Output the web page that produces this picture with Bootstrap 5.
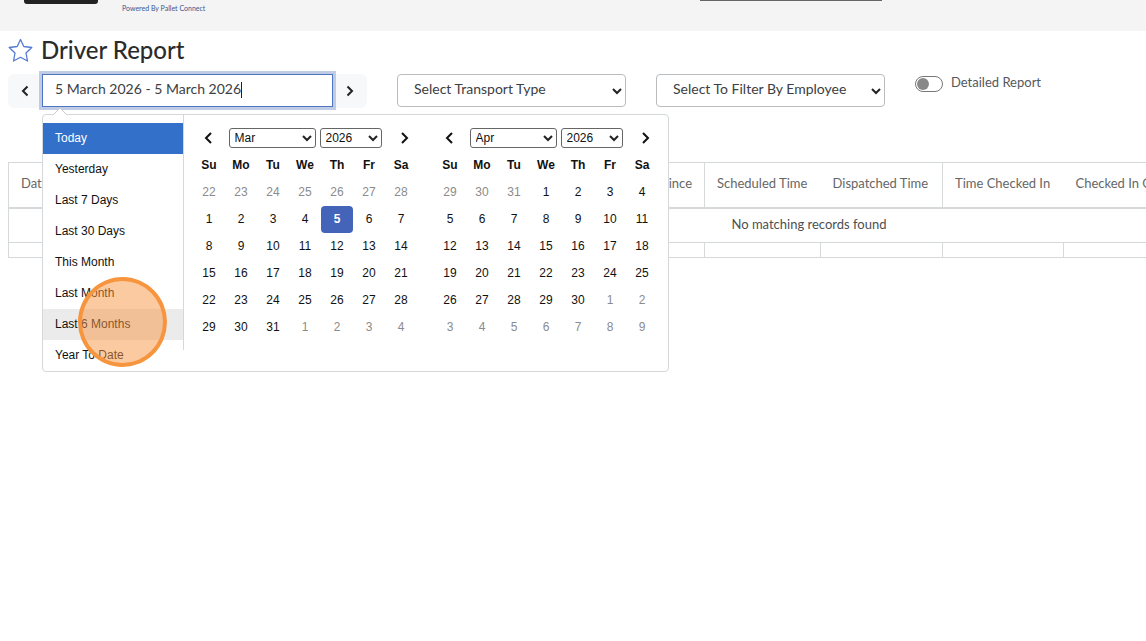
<!DOCTYPE html>
<html lang="en">
<head>
<meta charset="utf-8">
<meta name="viewport" content="width=device-width, initial-scale=1">
<title>Driver Report</title>
<link href="https://cdn.jsdelivr.net/npm/bootstrap@5.3.0/dist/css/bootstrap.min.css" rel="stylesheet">
<style>
body { font-family: Lato, sans-serif; font-size: 13px; line-height: 20px; color: #55585a; min-height: 100vh; }
.site-bar { background: #f4f4f4; height: 31px; padding-left: 24px; overflow: hidden; }
.logo-block { width: 74px; height: 4px; background: #222; border-radius: 0 0 3px 3px; }
.powered { font-size: 7px; line-height: 16px; color: #40578f; text-decoration: none; margin-left: 24px; }
.search-edge { width: 182px; height: 1px; background: #666; margin-left: 495px; }
.title-row { height: 35px; padding: 3px 8px 0; }
.page-title { font-size: 24px; line-height: 32px; color: #2b2b2b; }
.filters { padding: 4px 8px 54px; gap: 30px; }
.range-group { width: 359px; }
.step-btn { background: #f7f8fa; border: 0; width: 34px; height: 34px; padding-bottom: 4px; }
.range-input { width: 291px; height: 33px; flex: none; border: 1px solid #4f74c0; border-radius: 0; padding: 0 12px 4px; font-size: 14px; color: #3c4043; caret-color: transparent; outline: 0; box-shadow: 0 0 0 3px #c0cce6; }
.text-caret { left: 235px; top: 8px; width: 1px; height: 16px; background: #222; }
.filter-select { width: 229px; height: 33px; padding: 0 16px 3px; border: 1px solid #b9bcbf; border-radius: 4px; font-size: 14px; line-height: 20px; color: #3c4043; background-color: #fff; }
.filter-select, .cal-select { appearance: none; background-repeat: no-repeat; background-image: url("data:image/svg+xml,%3Csvg xmlns='http://www.w3.org/2000/svg' width='10' height='8'%3E%3Cpath d='M1 2l4 4 4-4' fill='none' stroke='%23222' stroke-width='2'/%3E%3C/svg%3E"); }
.filter-select { background-position: right 3px center; }
.detail-switch { padding-top: 2px; }
.toggle-box.form-check-input { width: 28px; height: 16px; margin: 4px 0 0; float: none; border-color: #777; background-image: url("data:image/svg+xml,%3Csvg xmlns='http://www.w3.org/2000/svg' viewBox='-4 -4 8 8'%3E%3Ccircle r='3.4' fill='%23888'/%3E%3C/svg%3E"); }
.report-wrap { margin-left: 8px; overflow: hidden; }
.report-table { width: 1602px; table-layout: fixed; color: #666; border-collapse: collapse; }
.report-table th, .report-table td { border: 1px solid #d5d9d9; }
.report-table th { height: 45px; padding: 0 0 3px 12px; font-weight: 400; border-bottom-width: 2px; white-space: nowrap; }
.report-table th.last-visible { padding-right: 12px; text-align: right; }
.report-table th.open-edge { border-right: 0; }
.report-table th.open-edge + th { border-left: 0; }
.report-table td { height: 35px; text-align: center; color: #4c4f51; padding: 0 0 3px; }
.report-table tfoot td { height: 15px; padding: 0; }
.picker { top: 40px; left: 34px; width: 627px; height: 258px; z-index: 5; background: #fff; border: 1px solid #d5d8da; border-radius: 4px; font: 12px/18px "Liberation Sans", Arial, sans-serif; color: #111; }
.picker-tip { top: -7px; left: 10px; width: 14px; height: 7px; }
.ranges { width: 141px; height: 235px; border-right: 1px solid #d5d8da; padding-top: 8px; flex: none; }
.ranges button { display: block; width: 100%; height: 31px; border: 0; background: none; padding: 0 12px 2px; text-align: left; color: #111; }
.ranges button.chosen { background: #3370ca; color: #fff; }
.ranges button.hovered { background: #ebebeb; }
.calendars { padding-left: 9px; gap: 17px; }
.cal { width: 224px; table-layout: fixed; margin-top: 10px; text-align: center; }
.cal th, .cal td { height: 27px; padding: 0 0 1px; }
.cal th { font-weight: 700; }
.cal td.off { color: #8b8b8b; }
.cal td.active { background: #4364b8; color: #fff; border-radius: 4px; font-weight: 700; }
.cal button { border: 0; background: none; padding: 0 2px 2px 0; width: 30px; height: 24px; }
.cal button.next { padding: 0 0 2px 6px; }
.cal-select { height: 20px; border: 1px solid #666; border-radius: 3px; padding: 0 5px; font-size: 12px; line-height: 18px; font-weight: 400; background-color: #fff; background-position: right 3px center; color: #111; }
.month { width: 87px; } .year { width: 62px; }
.click-mark { top: 162px; left: 35px; width: 89px; height: 90px; border: 4px solid #f7953e; border-radius: 50%; background: rgba(249,149,66,.5); pointer-events: none; }
</style>
</head>
<body>
<header class="site-bar d-flex align-items-start">
  <div class="logo-block"></div>
  <a href="#" class="powered">Powered By Pallet Connect</a>
  <div class="search-edge"></div>
</header>
<main>
  <div class="title-row d-flex align-items-center gap-2">
    <svg width="25" height="26" viewBox="0 0 25 26" fill="none" stroke="#557bd0" stroke-width="1.3" stroke-linejoin="round"><path d="M12.5 2.5L15.8 9.5 23.8 10.5 18 16 19.5 24 12.5 20.3 5.5 24 7 16 1.2 10.5 9.2 9.5Z"/></svg>
    <h1 class="page-title m-0">Driver Report</h1>
  </div>
  <div class="filters d-flex align-items-start">
    <div class="range-group d-flex position-relative mt-1">
      <button class="step-btn rounded-start" aria-label="Previous period"><svg width="8" height="12" viewBox="0 0 8 12" fill="none" stroke="#222" stroke-width="2"><path d="M6.5 1.5L2 6l4.5 4.5"/></svg></button>
      <div class="position-relative">
        <input class="range-input" type="text" aria-label="Date range" value="5 March 2026 - 5 March 2026" autofocus>
        <span class="text-caret position-absolute ms-n1"></span>
      </div>
      <button class="step-btn rounded-end" aria-label="Next period"><svg width="8" height="12" viewBox="0 0 8 12" fill="none" stroke="#222" stroke-width="2"><path d="M1.5 1.5L6 6l-4.5 4.5"/></svg></button>
      <div class="picker position-absolute d-flex align-items-start">
        <svg class="picker-tip position-absolute" viewBox="0 0 14 7"><path d="M0 7L7 0l7 7" fill="#fff" stroke="#ccc"/></svg>
        <div class="ranges">
          <button class="chosen">Today</button>
          <button>Yesterday</button>
          <button>Last 7 Days</button>
          <button>Last 30 Days</button>
          <button>This Month</button>
          <button>Last Month</button>
          <button class="hovered">Last 6 Months</button>
          <button>Year To Date</button>
        </div>
        <div class="d-flex align-items-start calendars"></div>
        <div class="click-mark position-absolute"></div>
      </div>
    </div>
    <select class="filter-select mt-1" aria-label="Transport type"><option>Select Transport Type</option></select>
    <select class="filter-select mt-1" aria-label="Employee"><option>Select To Filter By Employee</option></select>
    <div class="form-switch d-flex gap-2 ps-0 detail-switch">
      <input class="form-check-input toggle-box" type="checkbox" role="switch" id="detailed">
      <label for="detailed">Detailed Report</label>
    </div>
  </div>
  <div class="report-wrap">
    <table class="report-table">
      <colgroup><col width="116"><col width="116"><col width="116"><col width="116"><col width="116"><col width="116"><col width="116"><col width="122"><col width="121"><col width="140"><col></colgroup>
      <thead><tr><th>Date</th><th></th><th></th><th></th><th></th><th class="last-visible">Province</th><th class="open-edge">Scheduled Time</th><th>Dispatched Time</th><th class="open-edge">Time Checked In</th><th>Checked In On</th><th></th></tr></thead>
      <tbody><tr><td colspan="11">No matching records found</td></tr></tbody>
      <tfoot><tr><td></td><td></td><td></td><td></td><td></td><td></td><td></td><td></td><td></td><td></td><td></td></tr></tfoot>
    </table>
  </div>
</main>
<script src="https://cdn.jsdelivr.net/npm/bootstrap@5.3.0/dist/js/bootstrap.bundle.min.js"></script>
<script>
const chevron = d => `<svg width="9" height="12" viewBox="0 0 9 12" fill="none" stroke="#111" stroke-width="2"><path d="${d}"/></svg>`;
function calendar(name, month, chosen) {
  const first = new Date(2026, month, 1), lead = first.getDay();
  let rows = '';
  for (let r = 0; r < 6; r++) {
    rows += '<tr>';
    for (let c = 0; c < 7; c++) {
      const d = new Date(2026, month, 1 - (lead || 7) + r * 7 + c);
      const off = d.getMonth() !== month;
      rows += `<td class="${off ? 'off' : d.getDate() === chosen ? 'active' : ''}">${d.getDate()}</td>`;
    }
    rows += '</tr>';
  }
  return `<table class="cal"><thead><tr><th><button aria-label="Previous month">${chevron('M7 1L2 6l5 5')}</button></th>
    <th colspan="5"><div class="d-flex gap-1 justify-content-center"><select class="cal-select month" aria-label="Month"><option>${name}</option></select><select class="cal-select year" aria-label="Year"><option>2026</option></select></div></th>
    <th><button class="next" aria-label="Next month">${chevron('M2 1l5 5-5 5')}</button></th></tr>
    <tr>${['Su','Mo','Tu','We','Th','Fr','Sa'].map(d => `<th>${d}</th>`).join('')}</tr></thead><tbody>${rows}</tbody></table>`;
}
document.querySelector('.calendars').innerHTML = calendar('Mar', 2, 5) + calendar('Apr', 3, 0);
// place the text caret after the typed range
const range = document.querySelector('.range-input');
const pen = document.createElement('canvas').getContext('2d');
pen.font = '14px Lato';
document.querySelector('.text-caret').style.left = Math.round(13 + pen.measureText(range.value).width) + 'px';
range.focus();
</script>
</body>
</html>
